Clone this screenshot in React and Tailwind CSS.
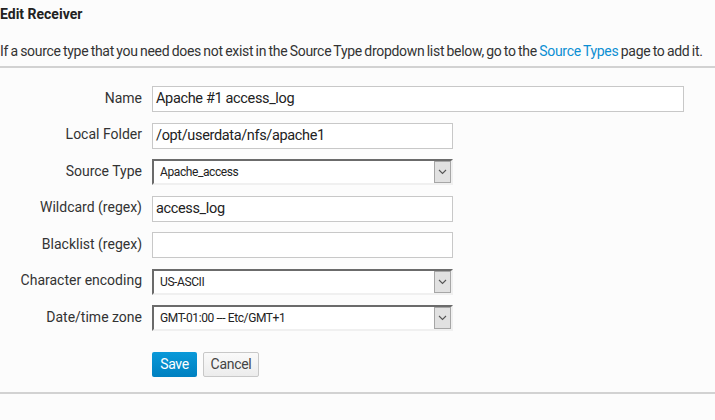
import React from "react";

const font = { fontFamily: "Roboto, 'Noto Sans', sans-serif" };

function Label({ children }) {
  return (
    <div className="flex h-[26px] items-center justify-end whitespace-nowrap pb-[2px] text-[14px] text-[#333]">
      {children}
    </div>
  );
}

function TextInput({ value, wide }) {
  return (
    <div
      className={`flex h-[26px] items-center border border-[#c8c8c8] bg-white px-[3px] text-[14.5px] tracking-[-0.35px] text-[#222] ${
        wide ? "w-[532px]" : "w-[301px]"
      }`}
    >
      {value}
    </div>
  );
}

function Select({ value }) {
  return (
    <div className="flex h-[26px] w-[301px] items-stretch border-2 border-t-[#6b6b6b] border-l-[#6b6b6b] border-r-[#f0f0f0] border-b-[#f0f0f0] bg-white">
      <div className="flex flex-1 items-center pl-[6px] text-[12px] tracking-[-0.4px] text-[#222]">{value}</div>
      <div className="flex w-[17px] items-center justify-center border border-[#a6a6a6] bg-[#e1e1e1]">
        <svg width="9" height="6" viewBox="0 0 9 6">
          <path d="M1 1 L4.5 4.5 L8 1" fill="none" stroke="#555" strokeWidth="1.1" />
        </svg>
      </div>
    </div>
  );
}

export default function App() {
  const rows = [
    ["Name", <TextInput value="Apache #1 access_log" wide />],
    ["Local Folder", <TextInput value="/opt/userdata/nfs/apache1" />],
    ["Source Type", <Select value="Apache_access" />],
    ["Wildcard (regex)", <TextInput value="access_log" />],
    ["Blacklist (regex)", <TextInput value="" />],
    ["Character encoding", <Select value="US-ASCII" />],
    ["Date/time zone", <Select value="GMT-01:00 --- Etc/GMT+1" />],
  ];
  return (
    <div className="h-[420px] w-[715px] overflow-hidden bg-[#fcfcfc] text-[#333]" style={font}>
      <div className="pt-[5px] text-[14px] font-bold leading-[18px] text-[#222]">Edit Receiver</div>
      <div className="mt-[19px] whitespace-nowrap text-[14px] leading-[18px] tracking-[-0.3px] [word-spacing:-0.8px]">
        If a source type that you need does not exist in the Source Type dropdown list below, go to the{" "}
        <span className="text-[#0c8fd3]">Source Types</span> page to add it.
      </div>
      <div className="mt-[6px] h-[2px] bg-[#d2d2d2]" />
      <div className="mt-[18px] grid grid-cols-[142px_auto] gap-x-[10px] gap-y-[10.5px]">
        {rows.map(([l, c]) => (
          <React.Fragment key={l}>
            <Label>{l}</Label>
            <div className="flex">{c}</div>
          </React.Fragment>
        ))}
      </div>
      <div className="ml-[152px] mt-[21px] flex gap-[6px]">
        <button className="h-[25px] w-[45px] rounded-[2px] bg-gradient-to-b from-[#0a99d9] to-[#0080c0] text-[14px] tracking-[-0.3px] text-white">
          Save
        </button>
        <button className="h-[25px] w-[56px] rounded-[2px] border border-[#c8c8c8] bg-gradient-to-b from-[#fafafa] to-[#ececec] text-[14px] tracking-[-0.3px] text-[#444]">
          Cancel
        </button>
      </div>
      <div className="mt-[15px] h-[2px] bg-[#d2d2d2]" />
    </div>
  );
}
